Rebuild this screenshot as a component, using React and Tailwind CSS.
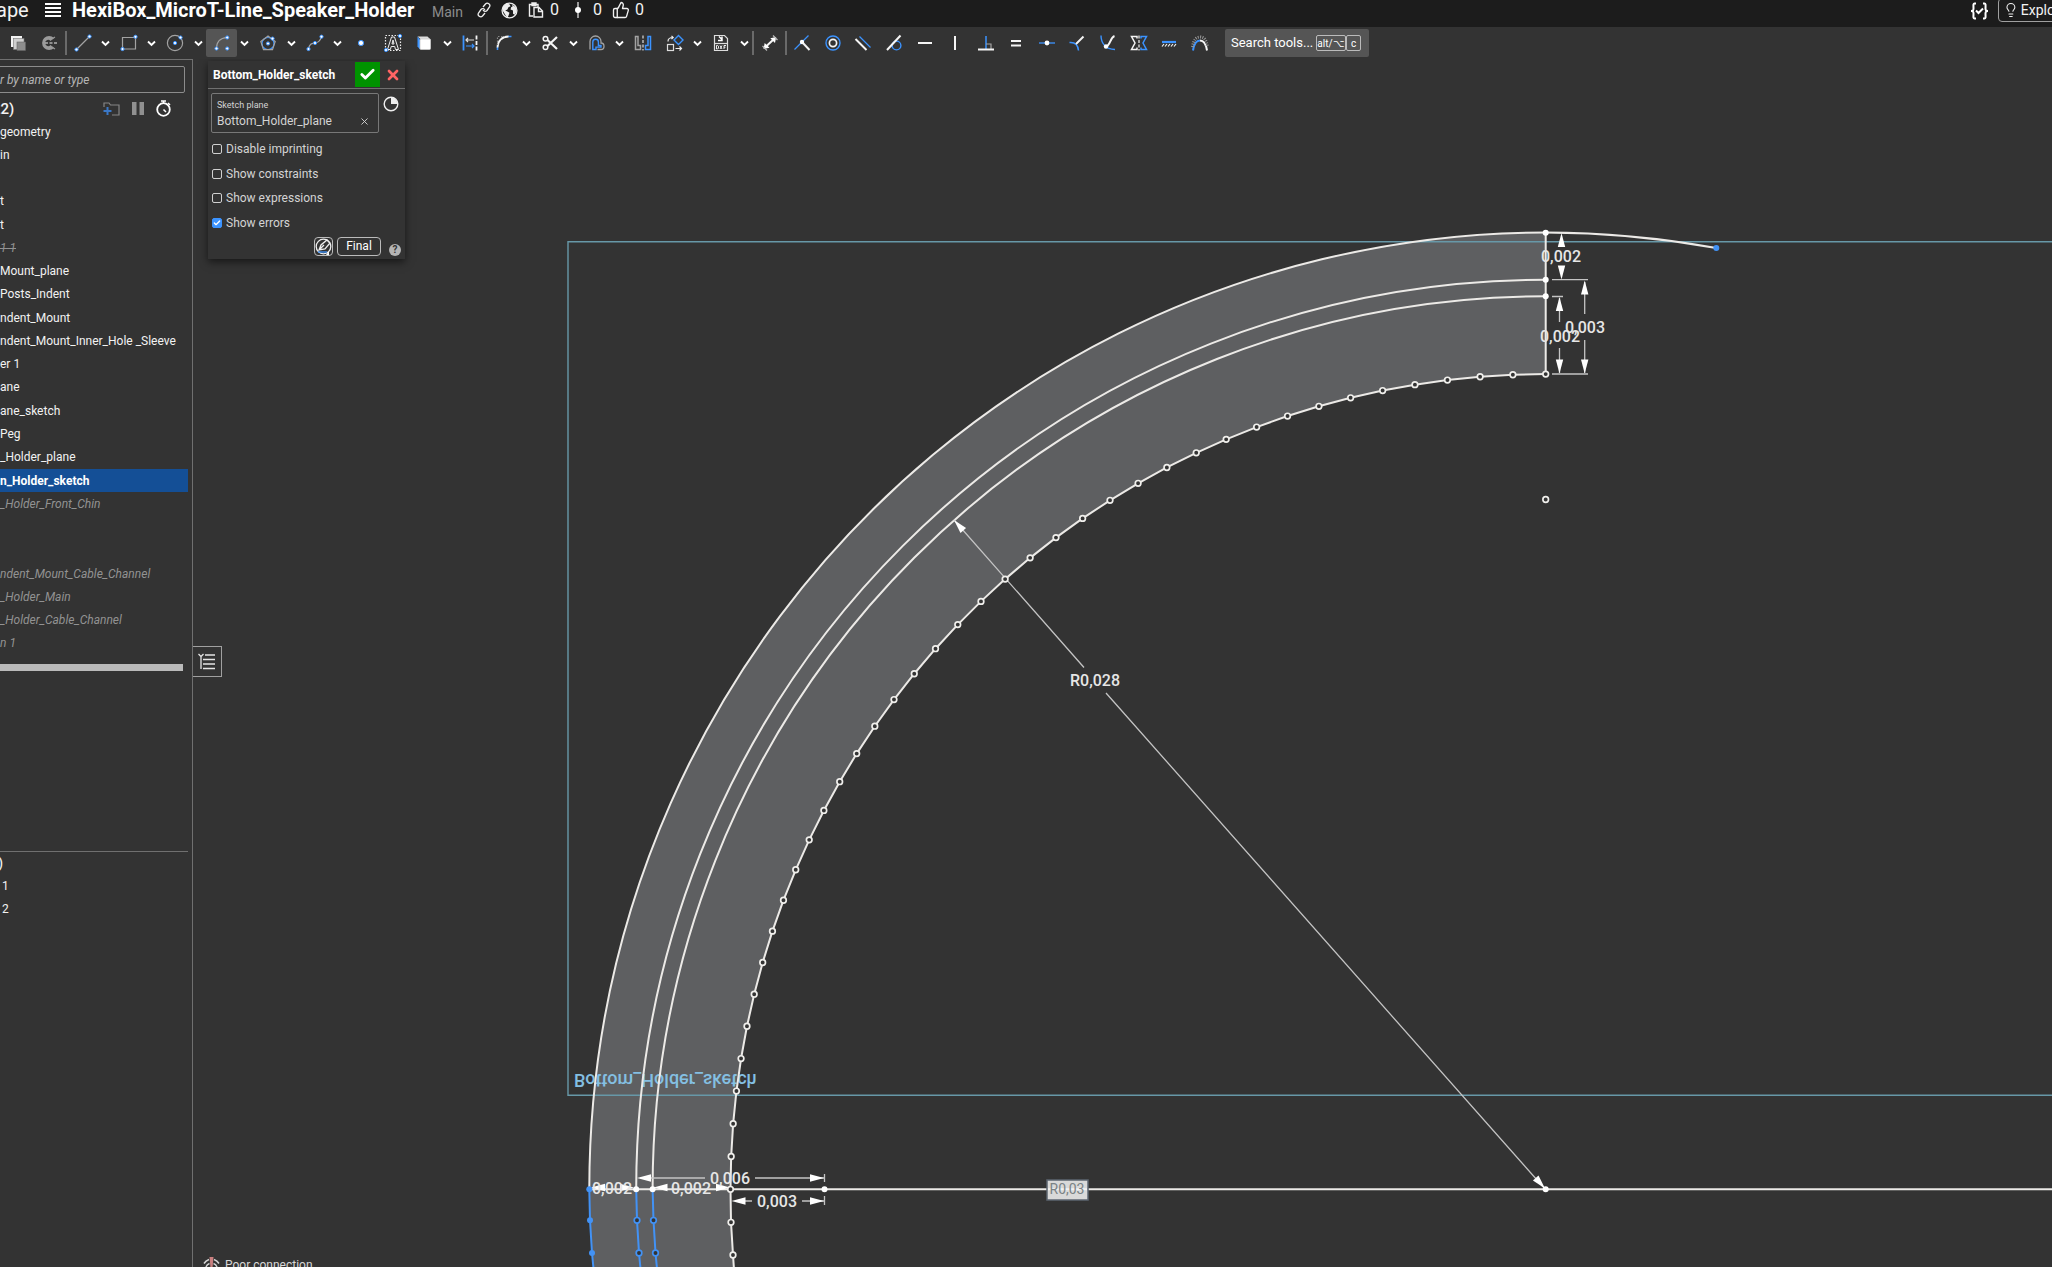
import React from "react";
import { Check, X, ThumbsUp, Lightbulb } from "lucide-react";

const B = "#3b93ff";
const W = "#f5f5f5";
const G = "#a3a3a3";

function Icon({ children, size = 18 }) {
  return (
    <svg width={size} height={size} viewBox="0 0 18 18" fill="none" stroke={W} strokeWidth="1.2" aria-hidden="true">
      {children}
    </svg>
  );
}

const dot = (x, y, r = 1.6) => (
  <circle key={x + "-" + y} cx={x} cy={y} r={r} fill="#fff" stroke={B} strokeWidth="1" />
);

const icons = {
  cube: (
    <Icon>
      <rect x="2" y="2" width="11" height="11" fill="#f3f3f3" stroke="none" />
      <rect x="4.5" y="4.5" width="10.5" height="11" fill="#cfcfcf" stroke="#777" strokeWidth=".6" />
      <rect x="8" y="8" width="8.5" height="8.5" fill="#8d8d8d" stroke="#666" strokeWidth=".6" />
    </Icon>
  ),
  revolve: (
    <Icon>
      <path d="M14 4A7 7 0 1 0 14 14L10.5 11A3 3 0 1 1 10.5 7Z" fill="#9b9b9b" stroke="none" />
      <path d="M5 9h12" stroke="#eee" strokeDasharray="3 1.5" />
      <path d="M12 5l3-2M12 13l3 2" stroke="#999" />
    </Icon>
  ),
  line: (
    <Icon>
      <path d="M2.5 15.5L15.5 2.5" stroke={G} />
      {dot(2.5, 15.5)}
      {dot(15.5, 2.5)}
    </Icon>
  ),
  rect: (
    <Icon>
      <path d="M2.5 3.5h13v11.500h-13z" stroke={G} />
      {dot(2.5, 15)}
      {dot(15.5, 2.8)}
    </Icon>
  ),
  circle: (
    <Icon>
      <circle cx="9" cy="9" r="7.6" stroke={G} />
      {dot(9, 9)}
      {dot(14.5, 3.5)}
    </Icon>
  ),
  arc: (
    <Icon>
      <path d="M3.500 14.500C3.500 8 7 4 14 3.500" stroke={G} />
      {dot(3.5, 14.5)}
      {dot(14.2, 3.5)}
      {dot(14.2, 14.5)}
    </Icon>
  ),
  polygon: (
    <Icon>
      <circle cx="9" cy="9.500" r="6" stroke={B} />
      <path d="M9 2l7.200 5.400-2.700 8.300h-9L1.800 7.400z" stroke={G} />
      {dot(9, 9.5)}
      {dot(13.5, 4.6)}
    </Icon>
  ),
  spline: (
    <Icon>
      <path d="M2.500 15c1-6 4-5.500 6.500-6s5-1 6.500-6.500" stroke={G} />
      {dot(2.5, 15)}
      {dot(9, 9)}
      {dot(15.5, 2.7)}
    </Icon>
  ),
  point: <Icon>{dot(9, 9, 2.6)}</Icon>,
  text: (
    <Icon>
      <rect x="1.500" y="1.500" width="15" height="15" stroke="#eee" strokeDasharray="1.500 1.500" />
      <path d="M3.500 15.500L7.500 3h3l4 12.500h-3l-.8-3H7.200l-.8 3zM8 10h2L9 6z" stroke="#eee" strokeWidth="1" />
      {dot(2, 16)}
      {dot(16, 2)}
    </Icon>
  ),
  face: (
    <Icon>
      <path d="M2.500 2.500h10l3 3H6z" fill="#ddd" stroke="none" />
      <path d="M2.500 2.500L5 5.500v10l-2.500-3z" fill={B} stroke="none" />
      <rect x="5" y="5" width="10.500" height="10.500" rx="1" fill="#fff" stroke="#ccc" strokeWidth=".8" />
    </Icon>
  ),
  linear: (
    <Icon>
      <path d="M2.500 1.500v15" stroke={B} strokeWidth="1.800" />
      <path d="M15.500 1.500v15" strokeWidth="1.800" strokeDasharray="4 1.500" />
      <path d="M13 6H5M7 4L5 6l2 2" stroke="#ddd" />
      <path d="M5 12h8M11 10l2 2-2 2" stroke={B} />
    </Icon>
  ),
  fillet: (
    <Icon>
      <path d="M2.500 16V13M13 2.500h3.500" stroke={B} strokeWidth="1.600" />
      <path d="M2.500 13.500C2.500 7 7 2.500 13.500 2.500" strokeWidth="1.800" />
      <path d="M2.500 11V2.500h7" stroke="#888" strokeDasharray="1.500 1.500" />
    </Icon>
  ),
  scissors: (
    <Icon>
      <path d="M6.500 6L16 15M6.500 12L16 3" strokeWidth="2.200" />
      <circle cx="4.500" cy="4.800" r="2.300" strokeWidth="1.500" />
      <circle cx="4.500" cy="13.200" r="2.300" strokeWidth="1.500" />
    </Icon>
  ),
  offset: (
    <Icon>
      <path d="M2 15.500V7.500a5.500 5.500 0 0 1 11 0v1.500c4 0 4 6.500 0 6.500H9.500" stroke={G} strokeWidth="1.300" />
      <path d="M4.800 15.500V8a2.800 2.800 0 0 1 5.600 0v3.500h2.600v1.600H8v2.400z" stroke={B} strokeWidth="1.400" />
    </Icon>
  ),
  mirror: (
    <Icon>
      <path d="M1.500 2.500H4V11.500H6.500V15.500H1.500z" stroke={G} strokeWidth="1.500" />
      <path d="M16.500 2.500H14V11.500H11.500V15.500H16.500z" stroke={B} strokeWidth="1.500" />
      <path d="M9 1.500v15" stroke="#ddd" strokeDasharray="3 1.500" />
    </Icon>
  ),
  transform: (
    <Icon>
      <path d="M12.500 1.500l4.500 4.500-4.500 4.500L8 6z" stroke={B} strokeWidth="1.400" />
      <rect x="1.500" y="10.500" width="6" height="6" stroke="#ddd" />
      <path d="M2 7.500C2 4 4 3.500 7 3.500M5.500 1.800L7.200 3.500 5.500 5.200M9.500 14.500h6M13.500 12.500l2 2-2 2" stroke="#eee" />
    </Icon>
  ),
  dxf: (
    <Icon>
      <path d="M2.500 1.500h10l3 3v12h-13z" stroke="#ddd" />
      <path d="M2.500 9.500h13" stroke="#ddd" />
      <path d="M7 2.500l3 3M10 2.500v4H6" stroke="#fff" strokeWidth="1.500" />
      <path d="M4.500 11.500v3.500h1.200l.8-.8v-2l-.8-.7zM8 11.500l2 3.500M10 11.500l-2 3.500M12 15v-3.500h2M12 13.200h1.500" stroke="#fff" strokeWidth=".9" />
    </Icon>
  ),
  dimension: (
    <Icon>
      <path d="M5 12.500L12.500 5.500" strokeWidth="2" />
      <path d="M2.500 15l1.200-6 4.800 4.800zM15.200 3l-5.900 1.200 4.700 4.800z" fill="#fff" stroke="none" />
      <path d="M1.500 12l4.500 4.500M12 1.500L16.500 6" stroke="#bbb" />
    </Icon>
  ),
};

const constraints = [
  ["Coincident", <><path d="M1.500 15.500L9 8M9 8l6.500-6.500" stroke={B} strokeWidth="1.300" /><path d="M9 8l7.500 8" strokeWidth="2" /><circle cx="9" cy="8" r="2.200" fill="#fff" stroke="none" /></>],
  ["Concentric", <><circle cx="9" cy="9" r="7" stroke={B} strokeWidth="1.400" /><circle cx="9" cy="9" r="3.600" strokeWidth="1.700" /></>],
  ["Parallel", <><path d="M5.500 2.500l11 11" stroke={B} strokeWidth="1.300" /><path d="M1.500 5l11 11" strokeWidth="2" /></>],
  ["Tangent", <><circle cx="11.500" cy="11.500" r="4.400" stroke={B} strokeWidth="1.400" /><path d="M2 16L15.500 1.500" strokeWidth="2" /></>],
  ["Horizontal", <path d="M2 9h14" strokeWidth="2" />],
  ["Vertical", <path d="M9 2v14" strokeWidth="2" />],
  ["Perpendicular", <><path d="M9 2v13" stroke={B} strokeWidth="1.500" /><path d="M9 10h5v5" stroke={G} /><path d="M1 15.500h16" strokeWidth="2" /></>],
  ["Equal", <path d="M4 7h10M4 11.500h10" strokeWidth="2" />],
  ["Midpoint", <><path d="M1 9h16" stroke={B} strokeWidth="1.300" /><circle cx="9" cy="9" r="2.400" fill="#fff" stroke="none" /></>],
  ["Normal", <><path d="M1.500 8.500c5.500-.5 8.500 2.500 9 8" stroke={B} strokeWidth="1.500" /><path d="M8 10l7.500-7.500" strokeWidth="2" /></>],
  ["Pierce", <><path d="M2 1.500c0 7 4 14 14 14" stroke={B} strokeWidth="1.400" /><path d="M7 12.500c4.500-1 4-9 8.500-10.500" strokeWidth="2" /><circle cx="7" cy="12.500" r="2.200" fill="#fff" stroke="none" /></>],
  ["Symmetric", <><path d="M7 4.500V2.500H1.500L5 9l-3.500 6.500H7v-2" strokeWidth="1.500" /><path d="M11 4.500V2.500h5.500L13 9l3.500 6.500H11v-2" stroke={B} strokeWidth="1.500" /><path d="M9 1.500v15" strokeDasharray="3 1.500" /></>],
  ["Fix", <><path d="M2 8h14" stroke={B} strokeWidth="2.200" /><path d="M2 12.500l2-2.500M5 12.500l2-2.500M8 12.500l2-2.500M11 12.500l2-2.500M14 12.500l2-2.500" /></>],
  ["Curvature", <><path d="M2 16.500C3 10 5.500 6.500 9 6.500" stroke={B} strokeWidth="2" /><path d="M9 6.500c3.500 0 6 3.500 7 10" strokeWidth="2" /><path d="M1.500 13C2.500 6 5 3 9 3s6.500 3 7.500 10" stroke="#999" strokeWidth="3" strokeDasharray="1 1.300" /></>],
];

function Chevron({ label }) {
  return (
    <button aria-label={label + " options"} className="flex h-7 w-[15px] items-center justify-center">
      <svg width="9" height="7" viewBox="0 0 9 7" fill="none" stroke="#fff" strokeWidth="1.900">
        <path d="M1 1.500l3.500 3.500L8 1.500" />
      </svg>
    </button>
  );
}

function Tool({ name, menu, active }) {
  return (
    <div className="flex items-center">
      <button
        aria-label={name}
        aria-pressed={!!active}
        className={"flex h-7 w-[31px] items-center justify-center rounded-xs " + (active ? "bg-[#555]" : "")}
      >
        {icons[name]}
      </button>
      {menu && <Chevron label={name} />}
    </div>
  );
}

const Sep = () => <div className="h-6 w-0.5 shrink-0 bg-[#6a6a6a]" />;

function TopBar() {
  return (
    <header className="flex h-[27px] shrink-0 items-start justify-between overflow-hidden bg-[#1c1c1c] text-[#f2f2f2]">
      <div className="flex h-5 items-center">
        <span className="-ml-1 w-8 text-xl leading-4">ape</span>
        <button aria-label="Document menu" className="ml-[17px]">
          <svg width="16" height="14" viewBox="0 0 16 14" fill="#fff">
            <path d="M0 0h16v2H0zM0 4h16v2H0zM0 8h16v2H0zM0 12h16v2H0z" />
          </svg>
        </button>
        <h1 className="ml-[11px] w-[352px] text-xl leading-5 font-bold whitespace-nowrap text-white">
          HexiBox_MicroT-Line_Speaker_Holder
        </h1>
        <span className="ml-2 w-8 pt-1 text-sm text-[#8c8c8c]">Main</span>
        <button aria-label="Copy link" className="ml-[13px]">
          <svg width="14" height="16" viewBox="0 0 14 16" fill="none" stroke="#eee" strokeWidth="1.300">
            <path d="M6 5l2.500-3c2-2 5.500.5 4 3L10 8.500c-1 1.200-3 1-4-.3M8 11l-2.500 3c-2 2-5.500-.5-4-3L4 7.500c1-1.200 3-1 4 .3" />
          </svg>
        </button>
        <svg className="ml-2.5" width="17" height="17" viewBox="0 0 16 16" aria-hidden="true">
          <circle cx="8" cy="8" r="7" fill="none" stroke="#eee" strokeWidth="1.200" />
          <path d="M2 4l3-2.500 3 .5 1 2-2 1-1 2-2 1 2 1 2 1-1 3-1 2-2-3-2.500-4zM10 2l4 3 .8 4-2 3-1.500-1V8L9 7l.5-2 1.500-1z" fill="#eee" />
        </svg>
        <button className="ml-2.5 flex items-center gap-1.5 text-base">
          <svg width="16" height="16" viewBox="0 0 16 16" fill="none" stroke="#eee" strokeWidth="1.400">
            <path d="M5 14H1.500V2.500H10V5M4 1h4v2.500H4zM6 5.500h5L14.500 9v6H6zM10.500 5.500V9.500h4" />
          </svg>
          0
        </button>
        <button className="ml-4 flex items-center gap-3 text-base">
          <svg width="6" height="16" viewBox="0 0 6 16" fill="#fff">
            <path d="M2.300 0h1.400v16H2.300z" opacity=".8" />
            <circle cx="3" cy="8" r="3" />
          </svg>
          0
        </button>
        <button className="ml-[10px] flex items-center gap-[5px] text-base">
          <ThumbsUp size={18} strokeWidth={1.8} />0
        </button>
      </div>
      <div className="-mr-4 flex items-start">
        <button aria-label="Variables" className="mt-0.5">
          <svg width="19" height="18" viewBox="0 0 19 18" fill="none" stroke="#fff" strokeWidth="2">
            <path d="M6 1.500H4.500C3 1.500 3.500 4 3.500 6.500S2.500 9 1 9c1.500 0 2.500 0 2.500 2.500s-.5 5 1 5H6M13 1.500h1.500c1.500 0 1 2.500 1 5S16.500 9 18 9c-1.500 0-2.500 0-2.500 2.500s.5 5-1 5H13" />
            <path d="M6 8.500l2.500 2.500L13 6.500" />
          </svg>
        </button>
        <button className="ml-[9px] flex h-6 w-[70px] -translate-y-0.5 items-center gap-0.5 rounded border border-[#a0a0a0] pl-1 text-sm">
          <Lightbulb size={18} strokeWidth={1.600} />
          Explore
        </button>
      </div>
    </header>
  );
}

function Toolbar() {
  return (
    <div role="toolbar" aria-label="Sketch tools" className="flex h-8 shrink-0 items-center bg-[#333]">
      <div className="flex w-[65px] shrink-0 items-center pl-0.5">
        <Tool name="cube" />
        <Tool name="revolve" />
      </div>
      <Sep />
      <div className="flex w-[419px] shrink-0 justify-between">
        <Tool name="line" menu />
        <Tool name="rect" menu />
        <Tool name="circle" menu />
        <Tool name="arc" menu active />
        <Tool name="polygon" menu />
        <Tool name="spline" menu />
        <Tool name="point" />
        <Tool name="text" />
        <Tool name="face" menu />
        <Tool name="linear" />
      </div>
      <Sep />
      <div className="flex w-[264px] shrink-0 justify-between">
        <Tool name="fillet" menu />
        <Tool name="scissors" menu />
        <Tool name="offset" menu />
        <Tool name="mirror" />
        <Tool name="transform" menu />
        <Tool name="dxf" menu />
      </div>
      <Sep />
      <Tool name="dimension" />
      <Sep />
      <div className="flex w-[428px] shrink-0">
        {constraints.map(([label, art]) => (
          <button key={label} aria-label={label} className="flex h-7 flex-1 items-center justify-center">
            <Icon>{art}</Icon>
          </button>
        ))}
      </div>
      <button className="ml-2.5 flex h-7 w-36 items-center rounded-xs bg-[#555] pl-1.5 text-[13px] whitespace-nowrap text-white">
        <span className="w-[85px] text-left">Search tools...</span>
        <kbd className="flex h-4 w-[30px] items-center justify-center rounded-xs border border-[#bbb] font-[Roboto] text-[10px]">alt/⌥</kbd>
        <kbd className="flex h-4 w-[15px] items-center justify-center rounded-xs border border-[#bbb] font-[Roboto] text-[10px]">c</kbd>
      </button>
    </div>
  );
}

const features = [
  ["geometry"], ["in"], [""], ["t"], ["t"], ["1 1", "struck"], ["Mount_plane"], ["Posts_Indent"],
  ["ndent_Mount"], ["ndent_Mount_Inner_Hole _Sleeve"], ["er 1"], ["ane"], ["ane_sketch"], ["Peg"],
  ["_Holder_plane"], ["n_Holder_sketch", "selected"], ["_Holder_Front_Chin", "off"], [""], [""],
  ["ndent_Mount_Cable_Channel", "off"], ["_Holder_Main", "off"], ["_Holder_Cable_Channel", "off"], ["n 1", "off"],
];

const featureStyle = {
  selected: "bg-[#144f96] font-bold text-white",
  off: "text-[#929292] italic",
  struck: "text-[#929292] italic line-through",
};

function Sidebar() {
  return (
    <aside className="flex w-[193px] shrink-0 flex-col overflow-hidden border-t border-r border-[#707070] bg-[#333] text-xs text-[#f2f2f2]">
      <input
        aria-label="Filter by name or type"
        placeholder="r by name or type"
        className="mt-1.5 -ml-1 h-[27px] w-[189px] shrink-0 rounded-xs border border-[#8c8c8c] bg-transparent pl-[3px] text-xs italic placeholder:text-[#b5b5b5]"
      />
      <div className="mt-1 flex h-[23px] shrink-0 items-center justify-between pr-[21px]">
        <span className="-ml-2 text-[15px] leading-5 font-medium">22)</span>
        <div className="flex items-center gap-3">
          <button aria-label="Add folder">
            <svg width="17" height="14" viewBox="0 0 17 14" fill="none">
              <path d="M1 5V1h5l1.500 2H16v10H9" stroke="#858585" strokeWidth="1.200" />
              <path d="M4.500 5v8M.5 9h8" stroke="#3a78c8" strokeWidth="2" />
            </svg>
          </button>
          <button aria-label="Pause">
            <svg width="12" height="13" viewBox="0 0 12 13" fill="#909090"><path d="M0 0h4.500v13H0zM7.500 0H12v13H7.500z" /></svg>
          </button>
          <button aria-label="Timing">
            <svg width="15" height="17" viewBox="0 0 15 17" fill="none" stroke="#fff" strokeWidth="1.800">
              <circle cx="7.500" cy="9.500" r="6.300" />
              <path d="M5 1h5M7.500 1v2.500M12 3l2 2M7.500 9.500l2.500 2.500" strokeWidth="1.500" />
            </svg>
          </button>
        </div>
      </div>
      <ul className="mr-1 grid h-[535px] shrink-0 auto-rows-fr">
        {features.map(([label, kind], i) => (
          <li key={i} className={"flex items-center whitespace-nowrap " + (featureStyle[kind] || "")}>{label}</li>
        ))}
      </ul>
      <div className="mt-[9px] mr-[9px] h-[7px] shrink-0 bg-[#bababa]" />
      <ul className="mt-[180px] mr-1 border-t border-[#707070] leading-[23px]">
        <li className="-ml-0.5 text-[15px]">)</li>
        <li className="pl-0.5">1</li>
        <li className="pl-0.5">2</li>
      </ul>
    </aside>
  );
}

function Option({ label, checked }) {
  return (
    <label className="flex h-6 items-center gap-1">
      <span className="grid h-2.5 w-2.5 place-items-center">
        <input
          type="checkbox"
          defaultChecked={checked}
          className="peer col-start-1 row-start-1 h-2.5 w-2.5 appearance-none rounded-xs border border-[#d0d0d0] checked:border-[#3b93ff] checked:bg-[#3b93ff]"
        />
        <Check size={8} strokeWidth={4} className="pointer-events-none col-start-1 row-start-1 text-white opacity-0 peer-checked:opacity-100" />
      </span>
      {label}
    </label>
  );
}

function SketchPanel() {
  return (
    <section className="absolute top-0.5 left-[15px] w-[197px] bg-[#333] pb-[3px] text-xs text-[#d4d4d4] shadow-[0_3px_8px_rgba(0,0,0,0.55)]">
      <div className="flex h-7 items-center border-b border-[#707070] pl-[5px]">
        <h2 className="flex-1 text-xs font-bold text-white">Bottom_Holder_sketch</h2>
        <button aria-label="Accept" className="flex h-[25px] w-[25px] items-center justify-center bg-[#009300] text-white">
          <Check size={17} strokeWidth={4} />
        </button>
        <button aria-label="Cancel" className="flex w-[25px] items-center justify-center text-[#ff6464]">
          <X size={16} strokeWidth={4} />
        </button>
      </div>
      <div className="mt-1 flex gap-1 pl-[3px]">
        <div className="h-10 w-[168px] rounded-xs border border-[#787878] pt-1 pl-[5px]">
          <div className="text-[9px] leading-[14px]">Sketch plane</div>
          <div className="flex items-center justify-between pr-2 leading-[18px]">
            Bottom_Holder_plane
            <button aria-label="Clear plane"><X size={11} strokeWidth={2} /></button>
          </div>
        </div>
        <button aria-label="Plane options" className="mt-[3px] h-4">
          <svg width="16" height="16" viewBox="0 0 16 16">
            <circle cx="8" cy="8" r="6.800" fill="none" stroke="#eee" strokeWidth="1.400" />
            <path d="M8 8V1.500A6.500 6.500 0 0 1 14.500 8z" fill="#eee" />
          </svg>
        </button>
      </div>
      <div className="mt-1 flex h-[98px] flex-col justify-between pl-1">
        <Option label="Disable imprinting" />
        <Option label="Show constraints" />
        <Option label="Show expressions" />
        <Option label="Show errors" checked />
      </div>
      <div className="mt-0.5 flex items-center justify-end gap-1 pr-1">
        <button aria-label="Edit sketch style" className="flex h-[19px] w-[19px] items-center justify-center rounded border border-[#bbb]">
          <svg width="17" height="17" viewBox="0 0 17 17" fill="none" stroke="#eee" strokeWidth="1.300">
            <circle cx="8.500" cy="8.500" r="7.300" />
            <path d="M4 12l2-5 6-5 3 3-5 6z M4 12l5-5" />
            <path d="M3 14h9" stroke={B} />
            <path d="M14 13v4h-3z" fill="#fff" stroke="none" />
          </svg>
        </button>
        <button className="h-[19px] w-11 rounded border border-[#bbb] leading-[17px] text-white">Final</button>
        <button aria-label="Help" className="mt-1.5 ml-1 flex h-3 w-3 items-center justify-center rounded-full bg-[#b5b5b5] text-[10px] font-bold text-[#333]">?</button>
      </div>
    </section>
  );
}

const CX = 1545.7;
const CY = 1189.3;
const INNER = 815.2;

function arrow(x, y, deg) {
  return <path key={`${x},${y},${deg}`} d="M0 0L-14 -3.700V3.700Z" fill="#fff" transform={`translate(${x} ${y}) rotate(${deg})`} />;
}

function Drawing() {
  const inner = Array.from({ length: 40 }, (_, i) => {
    const a = (i / 39) * (Math.PI / 2);
    return [CX - INNER * Math.cos(a), CY - INNER * Math.sin(a)];
  });
  const below = [[731, 1222.3], [733, 1255]];
  const innerPts = [[735, 1284], ...below.slice().reverse(), ...inner];
  const poly = innerPts.map((p) => p.join(",")).join(" ");
  return (
    <svg
      className="block h-full w-full"
      viewBox="193 59 1859 1208"
      preserveAspectRatio="xMinYMin slice"
      fill="none"
      role="img"
      aria-label="Bottom_Holder_sketch"
    >
      <path
        d={`M1545.700 232.700A956.600 956.600 0 0 0 589.300 ${CY}L590 1220.300L592 1253L595 1284L735 1284L733 1255L731 1222.300L730.500 ${CY}A815.200 815.200 0 0 1 1545.700 374Z`}
        fill="#5e5f61"
      />
      <path d="M2060 241.700H568V1095.300H2060" stroke="#6798a8" strokeWidth="1.400" />
      <g fill="#84bfe2" fontSize="18" fontWeight="500" fontFamily="Roboto, sans-serif">
        <text transform="translate(574 1074) scale(1 -1)">Bottom_Holder_sketch</text>
      </g>
      <g stroke="#eceae7" strokeWidth="2">
        <path d={`M589.300 ${CY}A956.600 956.600 0 0 1 1716.300 248`} />
        <path d={`M636.200 ${CY}A909.500 909.500 0 0 1 ${CX} 279.700`} />
        <path d={`M652.600 ${CY}A893 893 0 0 1 ${CX} 296.300`} />
        <polyline points={poly} />
        <path d={`M${CX} 232.700V374M589.300 ${CY}H2060`} />
      </g>
      <g stroke="#4292f5" strokeWidth="2">
        <path d={`M589.300 ${CY}L590 1220.300L592 1253L595 1284`} />
        <path d={`M636.200 ${CY}L637 1220.300L639 1253L642 1284`} />
        <path d={`M652.600 ${CY}L653.500 1220.300L655.500 1253L658.500 1284`} />
      </g>

      <g stroke="#c4c4c4" strokeWidth="1.300">
        <path d="M954 520L1084 667.500M1106 693L1545 1189" />
        <path d="M640 1178H705M755 1178H824M824.500 1174v8M824.500 1196v9M735 1201H752M802 1201H824" />
        <path d="M1552 279.700H1588M1552 374H1588M1552 296.500H1563" />
        <path d="M1584.700 282V314M1584.700 340V373M1559.500 298V322M1559.500 348V373" />
      </g>
      {arrow(954, 520, 228.5)}
      {arrow(1545, 1188.5, 48.5)}
      {arrow(637, 1178, 180)}
      {arrow(824, 1178, 0)}
      {arrow(731.5, 1201, 180)}
      {arrow(824, 1201, 0)}
      {arrow(591, 1187.5, 180)}
      {arrow(634, 1187.5, 0)}
      {arrow(653.5, 1187.5, 180)}
      {arrow(730, 1187.5, 0)}
      {arrow(1561.5, 233, 270)}
      {arrow(1561.5, 279.5, 90)}
      {arrow(1584.7, 280.5, 270)}
      {arrow(1584.7, 373.5, 90)}
      {arrow(1559.5, 297, 270)}
      {arrow(1559.5, 373.5, 90)}

      <g fill="#e6e6e6" fontSize="16" fontWeight="500" fontFamily="Roboto, sans-serif" textAnchor="middle">
        <text x="1095" y="686">R0,028</text>
        <text x="730" y="1184">0,006</text>
        <text x="777" y="1207">0,003</text>
        <text x="612" y="1194">0,002</text>
        <text x="691" y="1194">0,002</text>
        <text x="1561" y="262">0,002</text>
        <text x="1585" y="333">0,003</text>
        <text x="1560" y="342">0,002</text>
      </g>

      <rect x="1047" y="1180" width="41" height="20" fill="#d9d9d9" stroke="#5c6570" strokeWidth="1.500" />
      <path d={`M1048 ${CY}H1087`} stroke="#f2f2f2" strokeWidth="2" />
      <text x="1067" y="1194" fill="#7a8285" fontSize="14" fontFamily="Roboto, sans-serif" textAnchor="middle">R0,03</text>

      <g fill="#333" stroke="#f0efec" strokeWidth="1.700">
        {[...inner, ...below].map(([x, y], i) => <circle key={i} cx={x} cy={y} r="2.800" />)}
        <circle cx={CX} cy="499.500" r="2.800" />
      </g>
      <g fill="#333" stroke="#4292f5" strokeWidth="1.700">
        <circle cx="637" cy="1220.300" r="2.800" />
        <circle cx="639" cy="1253" r="2.800" />
        <circle cx="653.500" cy="1220.300" r="2.800" />
        <circle cx="655.500" cy="1253" r="2.800" />
      </g>
      <g fill="#4292f5">
        <circle cx="589.300" cy={CY} r="3" />
        <circle cx="590" cy="1220.300" r="3" />
        <circle cx="592" cy="1253" r="3" />
        <circle cx="1716.300" cy="248" r="3" />
      </g>
      <g fill="#fff">
        <circle cx="636.200" cy={CY} r="3" />
        <circle cx="652.600" cy={CY} r="3" />
        <circle cx="824.500" cy={CY} r="3" />
        <circle cx={CX} cy={CY} r="3" />
        <circle cx={CX} cy="232.700" r="3" />
        <circle cx={CX} cy="279.700" r="3" />
        <circle cx={CX} cy="296.300" r="3" />
      </g>
    </svg>
  );
}

export default function App() {
  return (
    <div className="flex h-screen flex-col overflow-hidden bg-[#333] font-[Roboto,sans-serif]">
      <TopBar />
      <Toolbar />
      <div className="flex min-h-0 flex-1">
        <Sidebar />
        <main className="relative min-w-0 flex-1 overflow-hidden">
          <Drawing />
          <SketchPanel />
          <button
            aria-label="Toggle feature list"
            className="absolute top-[587px] -left-px flex h-[31px] w-[30px] items-center justify-center border border-l-0 border-[#a0a0a0] bg-[#333]"
          >
            <svg width="17" height="17" viewBox="0 0 17 17" fill="none" stroke="#e5e5e5" strokeWidth="1.300">
              <path d="M.500 1l2.500 2.500L5.500 1M3 4v12M7 2h10M5 6.500h12M5 11h12M5 15.500h12" />
            </svg>
          </button>
          <div className="absolute -bottom-2 left-2.5 flex items-center gap-[5px] text-xs leading-5 text-[#d8d8d8]">
            <svg width="17" height="17" viewBox="0 0 17 17" fill="none" stroke="#d5d5d5" strokeWidth="1.500">
              <path d="M1 6.500A9 9 0 0 1 6 2.500M16 6.500A9 9 0 0 0 11 2.500M3 10a6 6 0 0 1 3.500-3.500M14 10a6 6 0 0 0-3.500-3.500" />
              <path d="M6.500 0h4l-1 11h-2z" fill="#c98080" stroke="none" />
              <circle cx="8.500" cy="14.500" r="1.700" fill="#c98080" stroke="none" />
            </svg>
            Poor connection
          </div>
        </main>
      </div>
    </div>
  );
}
